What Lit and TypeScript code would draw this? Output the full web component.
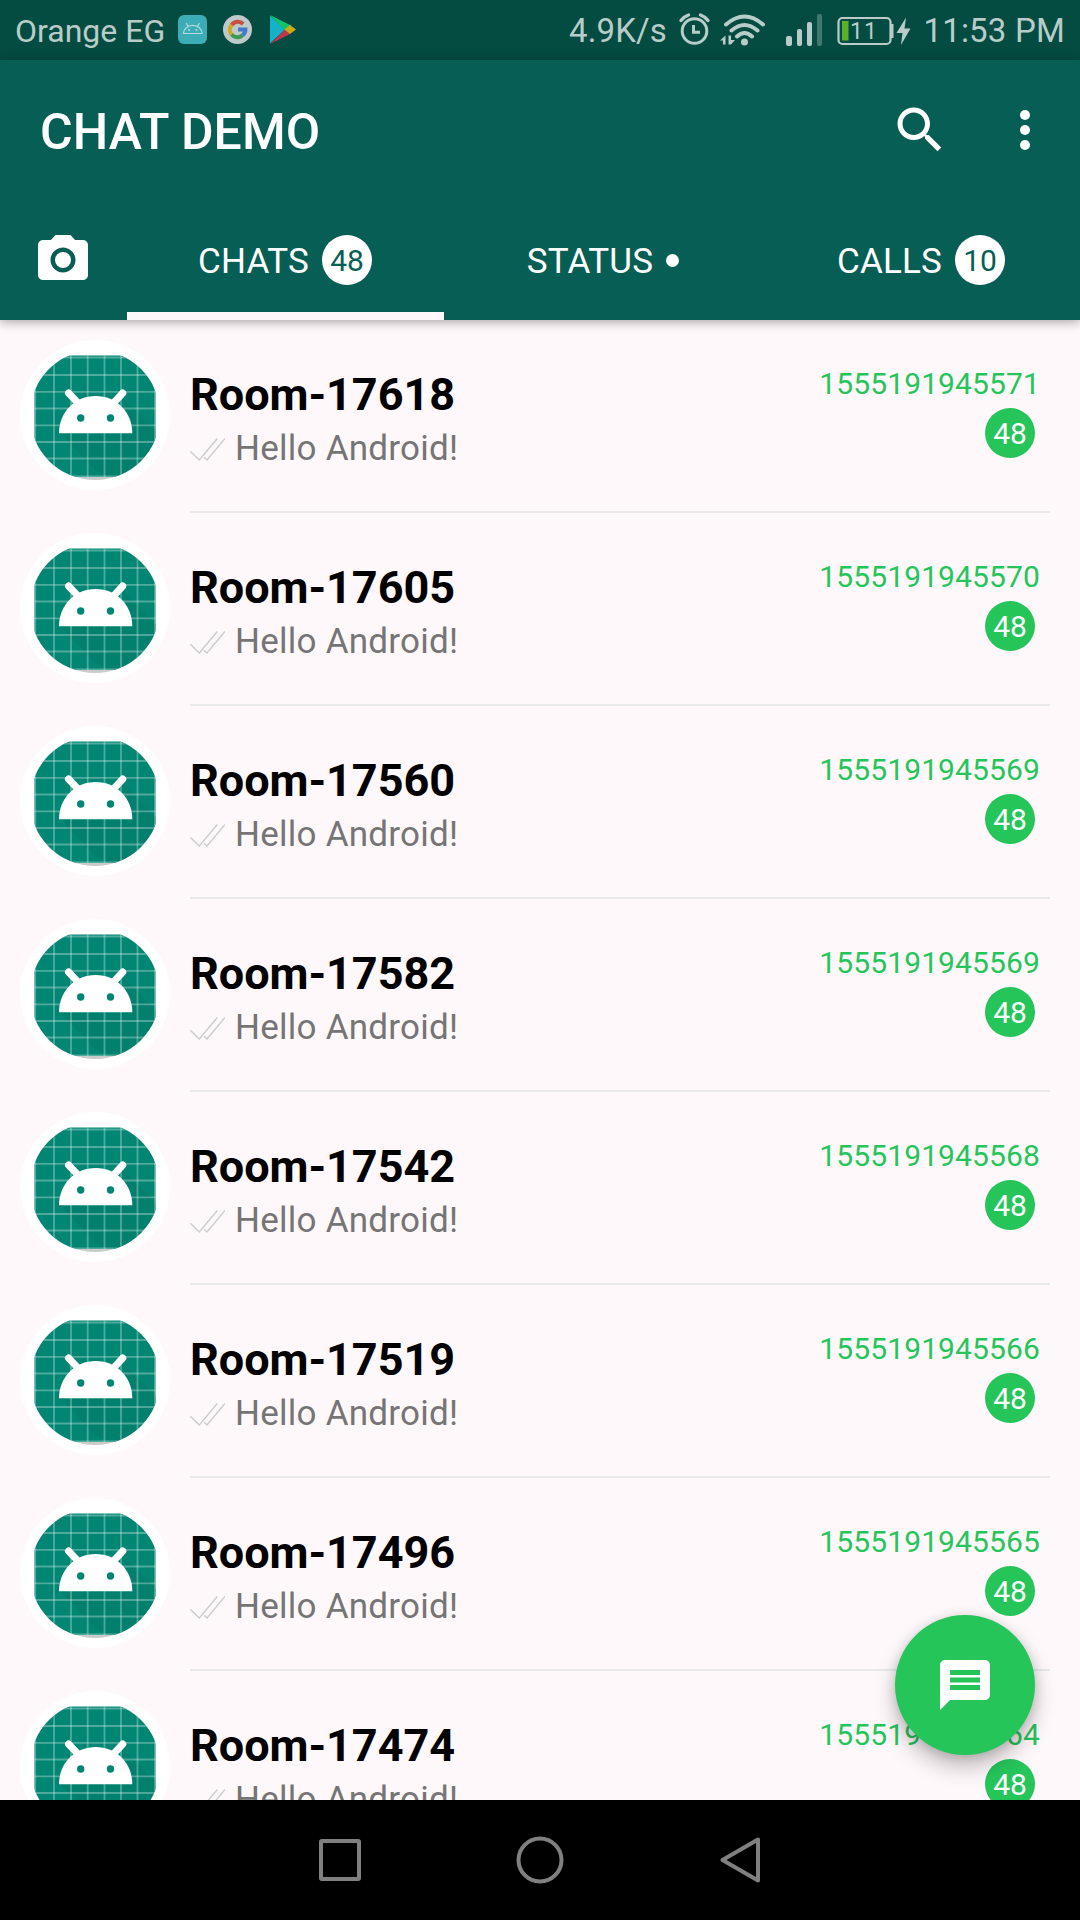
import { LitElement, html, css, svg } from "lit";
import { customElement, property } from "lit/decorators.js";

interface Chat {
  room: string;
  time: string;
}

const CHATS: Chat[] = [
  { room: "Room-17618", time: "1555191945571" },
  { room: "Room-17605", time: "1555191945570" },
  { room: "Room-17560", time: "1555191945569" },
  { room: "Room-17582", time: "1555191945569" },
  { room: "Room-17542", time: "1555191945568" },
  { room: "Room-17519", time: "1555191945566" },
  { room: "Room-17496", time: "1555191945565" },
  { room: "Room-17474", time: "1555191945564" },
];

const GRID_X = [54, 71, 87.7, 104.5, 121, 137.5];
const GRID_Y = [375, 391.8, 408.5, 425.3, 442, 458.5];

@customElement("status-bar")
class StatusBar extends LitElement {
  static styles = css`
    :host { display: flex; height: 60px; background: #044b41; color: #b8cdc9; align-items: center;
      justify-content: space-between; padding: 0 15px 0 15px; font: 400 33px/60px Roboto, sans-serif; }
    .side { display: flex; align-items: center; height: 60px; }
    .carrier { width: 163px; font-size: 32px; letter-spacing: 0; white-space: nowrap; padding-top: 2px; }
    .speed { white-space: nowrap; padding: 2px 7px 0 0; letter-spacing: 0.15px; }
    .clock { width: 145px; text-align: right; white-space: nowrap; padding-top: 2px; letter-spacing: 0.2px; }
    svg { display: block; flex: none; }
  `;
  render() {
    return html`
      <div class="side">
        <span class="carrier">Orange EG</span>
        <svg width="122" height="60" viewBox="178 0 122 60">
          <rect x="178" y="15" width="29" height="29" rx="6" fill="#3cacb6" />
          <path d="M183.500 33.500a9.300 8.200 0 0 1 18.600 0zM188.300 26.700l-2-3.600M197.300 26.700l2-3.600" fill="none" stroke="#b5dadb" stroke-width="1.200" />
          <circle cx="189" cy="30" r="1" fill="#b5dadb" /><circle cx="196.500" cy="30" r="1" fill="#b5dadb" />
          <circle cx="237.500" cy="29.500" r="14.500" fill="#becbc8" />
          <g fill="none" stroke-width="4">
            <path d="M231.600 25a7.600 7.600 0 0 1 11.600-1" stroke="#c54f42" />
            <path d="M231.600 34.500a7.600 7.600 0 0 1 0-9.500" stroke="#d0a91f" />
            <path d="M242.600 35.300a7.600 7.600 0 0 1-11-.8" stroke="#3c9852" />
            <path d="M238 29.600h7.400a7.600 7.600 0 0 1-2.800 5.700" stroke="#4378cb" />
          </g>
          <path d="M270 15.500v28l15-14z" fill="#13b2c9" />
          <path d="M270 15l21 10.500-6 5z" fill="#12c469" />
          <path d="M270 44l21-10.500-6-4z" fill="#bd374b" />
          <path d="M290 25l6 4.500-6 4.500-5.500-4.500z" fill="#c7ac13" />
        </svg>
      </div>
      <div class="side">
        <span class="speed">4.9K/s</span>
        <svg width="246" height="60" viewBox="674 0 246 60" fill="none" stroke="#b8cdc9">
          <circle cx="694.500" cy="31" r="12.300" stroke-width="3" />
          <path d="M693.500 25v7.200h6.500" stroke-width="3" />
          <path d="M681 20.500q3-4 7.500-5.500M708 20.500q-3-4-7.500-5.500" stroke-width="3.400" stroke-linecap="round" />
          <path d="M726 24.500q18.500-16 37 0M731.500 30.500q13-11 26 0M737 36.500q7.500-7 15 0" stroke-width="4" stroke-linecap="round" />
          <circle cx="744.500" cy="42" r="3.500" fill="#b8cdc9" stroke="none" />
          <path d="M720 40.500l5.500-5v9h-2.500v-4zM728.500 35.500h2.500v4.500h4l-4 4.500h-2.500z" fill="#b8cdc9" stroke="none" />
          <g fill="#b8cdc9" stroke="none">
            <rect x="786" y="36" width="6" height="10" rx="2" />
            <rect x="797" y="29" width="5" height="17" rx="2" />
            <rect x="807" y="22" width="5" height="24" rx="2" />
            <rect x="817" y="14" width="5" height="32" rx="2" opacity=".35" />
          </g>
          <rect x="838.500" y="18" width="52" height="26" rx="4" stroke-width="2.200" />
          <path d="M892 24v14" stroke-width="3" />
          <rect x="842" y="21" width="6.500" height="19.500" fill="#5bb02c" stroke="none" />
          <text x="864" y="39" font-size="23" letter-spacing="1" text-anchor="middle" fill="#b8cdc9" stroke="none">11</text>
          <path d="M906 17.500l-9.500 15.500h6l-1.500 12 9.500-16.500h-6z" fill="#b8cdc9" stroke="none" />
        </svg>
        <span class="clock">11:53 PM</span>
      </div>`;
  }
}

@customElement("app-header")
class AppHeader extends LitElement {
  static styles = css`
    :host { display: flex; flex-direction: column; height: 260px; background: #075e54; color: #fff;
      font-family: Roboto, sans-serif; box-shadow: 0 2px 10px rgba(0, 0, 0, .35); position: relative; z-index: 1; }
    .bar { display: flex; height: 140px; align-items: center; padding: 0 25px 0 40px; }
    h1 { flex: 1; margin: 0; font-size: 50px; font-weight: 500; line-height: 60px; padding-top: 4px; letter-spacing: 0.1px; }
    .actions { display: flex; gap: 45px; }
    svg { display: block; fill: #fff; }
    .tabs { display: grid; grid-template-columns: 127px 317px 318px 318px; height: 120px; }
    .tab { display: flex; align-items: center; justify-content: center; gap: 13px; font-size: 35px;
      line-height: 50px; box-sizing: border-box; border-bottom: 8px solid transparent; padding-top: 8px; }
    .label { padding-top: 3px; letter-spacing: 0.2px; }
    .camera { padding-right: 1px; }
    .active { border-bottom-color: #fff8fa; padding-right: 1px; }
    .badge { width: 50px; height: 50px; border-radius: 50%; background: #fff; color: #075e54;
      font-size: 30px; line-height: 51px; text-align: center; }
    .dot { width: 13px; height: 13px; border-radius: 50%; background: #fff; }
  `;
  render() {
    return html`
      <div class="bar">
        <h1>CHAT DEMO</h1>
        <div class="actions">
          <svg width="60" height="60" viewBox="0 0 24 24"><path d="M15.500 14h-.79l-.28-.27C15.410 12.590 16 11.110 16 9.500 16 5.910 13.090 3 9.500 3S3 5.910 3 9.500 5.910 16 9.500 16c1.610 0 3.090-.59 4.230-1.570l.27.28v.79l5 4.990L20.490 19l-4.990-5zm-6 0C7.010 14 5 11.990 5 9.500S7.010 5 9.500 5 14 7.010 14 9.500 11.990 14 9.500 14z" /></svg>
          <svg width="60" height="60" viewBox="0 0 24 24"><circle cx="12" cy="6" r="2" /><circle cx="12" cy="12" r="2" /><circle cx="12" cy="18" r="2" /></svg>
        </div>
      </div>
      <div class="tabs">
        <div class="tab camera"><svg width="60" height="60" viewBox="0 0 24 24"><circle cx="12" cy="12" r="3.200" /><path d="M9 2L7.170 4H4c-1.100 0-2 .9-2 2v12c0 1.100.9 2 2 2h16c1.100 0 2-.9 2-2V6c0-1.100-.9-2-2-2h-3.170L15 2H9zm3 15c-2.760 0-5-2.240-5-5s2.240-5 5-5 5 2.240 5 5-2.240 5-5 5z" /></svg></div>
        <div class="tab active"><span class="label">CHATS</span><span class="badge">48</span></div>
        <div class="tab"><span class="label">STATUS</span><span class="dot"></span></div>
        <div class="tab"><span class="label">CALLS</span><span class="badge">10</span></div>
      </div>`;
  }
}

@customElement("chat-row")
class ChatRow extends LitElement {
  @property() room = "";
  @property() time = "";
  static styles = css`
    :host { display: flex; height: 193px; box-sizing: border-box; padding: 20px 30px 0 20px; gap: 20px;
      font-family: Roboto, sans-serif; }
    .avatar { display: block; flex: none; }
    .body { flex: 1; display: flex; justify-content: space-between; border-bottom: 2px solid #e9e8ea; }
    .name { font-size: 45px; font-weight: 700; line-height: 52px; color: #000; margin-top: 29px; letter-spacing: -0.05px; }
    .message { display: flex; align-items: center; gap: 10px; font-size: 35px; line-height: 42px; color: #757575; margin-top: 7px; }
    .message svg { flex: none; }
    .message span { letter-spacing: 0.25px; }
    .meta { display: flex; flex-direction: column; align-items: flex-end; padding-right: 10px; }
    .time { font-size: 30px; line-height: 36px; color: #25c55a; margin-top: 26px; letter-spacing: 0.12px; }
    .count { width: 50px; height: 50px; border-radius: 50%; background: #25c55a; color: #fff; font-size: 30px;
      line-height: 51px; text-align: center; margin: 6px 5px 0 0; }
  `;
  render() {
    return html`
      <svg class="avatar" width="150" height="150" viewBox="20 340 150 150">
        <defs>
          <clipPath id="round"><circle cx="95" cy="415" r="65" /></clipPath>
          <clipPath id="tile"><rect x="34.500" y="355.500" width="121" height="121.500" /></clipPath>
        </defs>
        <circle cx="95" cy="415" r="75" fill="#fff" />
        <g clip-path="url(#round)">
          <rect x="34.500" y="357" width="121" height="123" fill="#c9cccb" />
          <g clip-path="url(#tile)">
            <rect x="34" y="355" width="122" height="122" fill="#018673" />
            <path d="M60 433L95 470L110 477H156V431L122 397L132 433z" fill="#017b69" opacity=".55" />
            <g stroke="#fff" stroke-opacity=".3" stroke-width="1.800">
              ${GRID_X.map((x) => svg`<path d="M${x} 355V477" />`)}
              ${GRID_Y.map((y) => svg`<path d="M34 ${y}H156" />`)}
              <path d="M35.200 355V477M155 355V477M34 357.500H156M34 476.500H156" />
            </g>
          </g>
        </g>
        <path d="M59 433.300C59 412 75 396 95.700 396S132.300 412 132.300 433.300z" fill="#fff" />
        <path d="M68.500 393L77.500 402.500M122.800 393L114 402.500" stroke="#fff" stroke-width="7" stroke-linecap="round" />
        <circle cx="80.700" cy="418" r="3.700" fill="#018673" /><circle cx="110.500" cy="418" r="3.700" fill="#018673" />
      </svg>
      <div class="body">
        <div>
          <div class="name">${this.room}</div>
          <div class="message">
            <svg width="35" height="26" viewBox="190 437 35 26" fill="none" stroke="#cfcbcd" stroke-width="1.400"><path d="M190.300 452.300L199.300 461L217.300 439.500M204 458.300L207 461L225 439.500" /></svg>
            <span>Hello Android!</span>
          </div>
        </div>
        <div class="meta">
          <div class="time">${this.time}</div>
          <div class="count">48</div>
        </div>
      </div>`;
  }
}

@customElement("nav-bar")
class NavBar extends LitElement {
  static styles = css`
    :host { display: flex; height: 120px; background: #000; align-items: center; justify-content: center; gap: 140px; }
    svg { display: block; fill: none; stroke: #808080; stroke-width: 4; stroke-linejoin: round; }
  `;
  render() {
    return html`
      <svg width="60" height="60"><rect x="11" y="11" width="38" height="38" rx="1" /></svg>
      <svg width="60" height="60"><circle cx="30" cy="30" r="21.500" /></svg>
      <svg width="60" height="60"><path d="M12.500 30L48 9.500V50.500z" /></svg>`;
  }
}

@customElement("app-root")
class AppRoot extends LitElement {
  static styles = css`
    :host { display: flex; flex-direction: column; width: 1080px; height: 1920px; overflow: hidden;
      background: #fff8fa; position: relative; }
    .list { flex: 1; min-height: 0; overflow: hidden; }
    .fab { position: absolute; left: 895px; top: 1615px; width: 140px; height: 140px; border-radius: 50%;
      background: #25c55a; display: flex; align-items: center; justify-content: center;
      box-shadow: 0 12px 22px rgba(0, 0, 0, .24), 0 2px 12px rgba(0, 0, 0, .14); }
    .fab svg { display: block; fill: #fff; }
    nav-bar { position: relative; z-index: 2; }
  `;
  render() {
    return html`
      <status-bar></status-bar>
      <app-header></app-header>
      <div class="list">
        ${CHATS.map((c) => html`<chat-row .room=${c.room} .time=${c.time}></chat-row>`)}
      </div>
      <div class="fab">
        <svg width="60" height="60" viewBox="0 0 24 24"><path d="M20 2H4c-1.100 0-1.990.9-1.990 2L2 22l4-4h14c1.100 0 2-.9 2-2V4c0-1.100-.9-2-2-2zm-2 12H6v-2h12v2zm0-3H6V9h12v2zm0-3H6V6h12v2z" /></svg>
      </div>
      <nav-bar></nav-bar>`;
  }
}
